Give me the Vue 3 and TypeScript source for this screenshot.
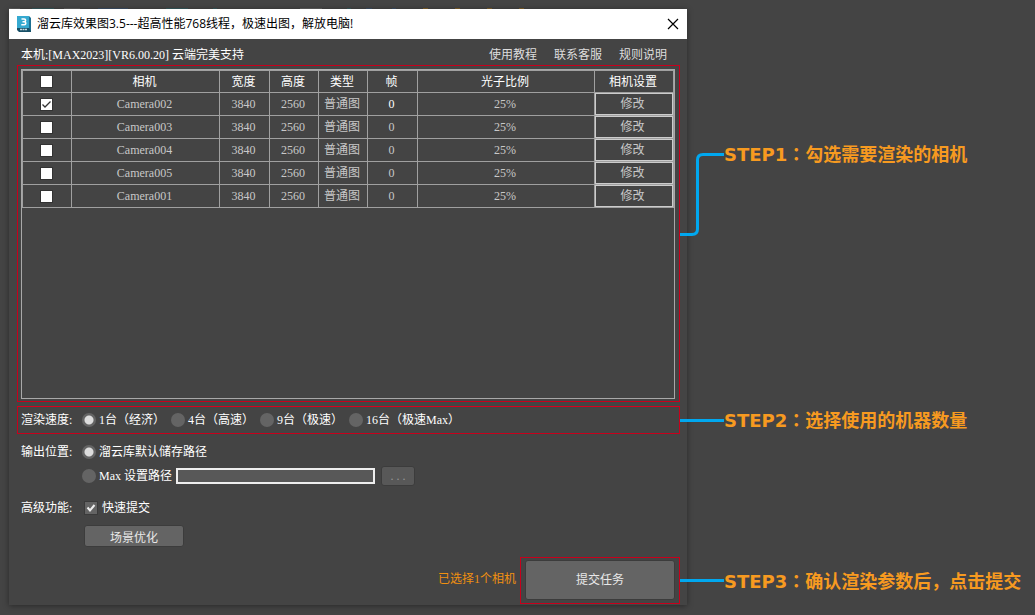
<script setup lang="ts">
import { ref, computed } from 'vue'

interface Camera {
  name: string
  width: number
  height: number
  checked: boolean
}

const cameras = ref<Camera[]>([
  { name: 'Camera002', width: 3840, height: 2560, checked: true },
  { name: 'Camera003', width: 3840, height: 2560, checked: false },
  { name: 'Camera004', width: 3840, height: 2560, checked: false },
  { name: 'Camera005', width: 3840, height: 2560, checked: false },
  { name: 'Camera001', width: 3840, height: 2560, checked: false },
])
const selected = computed(() => cameras.value.filter((c) => c.checked).length)
const all = computed({
  get: () => selected.value === cameras.value.length,
  set: (v: boolean) => cameras.value.forEach((c) => (c.checked = v)),
})

const speeds = ['1台（经济）', '4台（高速）', '9台（极速）', '16台（极速Max）']
const speed = ref(0)
const output = ref('default')
const path = ref('')
const quick = ref(true)
const links = ['使用教程', '联系客服', '规则说明']
</script>

<template>
  <div class="desktop">
    <div class="behind" aria-hidden="true"></div>
    <main class="window">
      <header class="titlebar">
        <svg class="logo" width="16" height="18" viewBox="0 0 16 18" aria-hidden="true">
          <path d="M1 1h11l2 2v14H3l-2-2z" fill="#1c6f92" />
          <path d="M0 1h12v12H0z" fill="#35a9d0" />
          <path d="M0 13h12l2 3v1H2l-2-2z" fill="#174f66" />
          <path d="M4.500 4H7.200Q8.600 4 8.600 5.300T7.200 6.700H5.500M7.200 6.700Q8.800 6.700 8.800 8.200T7.200 9.800H4.300" fill="none" stroke="#fff" stroke-width="1.600" />
          <path d="M3 14.500h7" stroke="#c5d8df" stroke-width="1.400" stroke-dasharray="2 .5" />
        </svg>
        <h1>溜云库效果图3.5---超高性能768线程，极速出图，解放电脑!</h1>
        <button class="close" aria-label="关闭">
          <svg width="12" height="12" viewBox="0 0 12 12"><path d="M1 1 11 11M11 1 1 11" stroke="#000" stroke-width="1.200" /></svg>
        </button>
      </header>

      <div class="info">
        <span>本机:[MAX2023][VR6.00.20] 云端完美支持</span>
        <nav><a v-for="l in links" :key="l" href="#">{{ l }}</a></nav>
      </div>

      <section class="frame cameras">
        <div class="panel">
          <table>
            <colgroup>
              <col class="c-check" /><col class="c-name" /><col class="c-size" /><col class="c-num" />
              <col class="c-num" /><col class="c-size" /><col /><col class="c-edit" />
            </colgroup>
            <thead>
              <tr>
                <th><input v-model="all" type="checkbox" class="tick" aria-label="全选" /></th>
                <th>相机</th><th>宽度</th><th>高度</th><th>类型</th><th>帧</th><th>光子比例</th><th>相机设置</th>
              </tr>
            </thead>
            <tbody>
              <tr v-for="(c, i) in cameras" :key="c.name">
                <td><input v-model="c.checked" type="checkbox" class="tick" :aria-label="c.name" /></td>
                <td>{{ c.name }}</td>
                <td>{{ c.width }}</td>
                <td>{{ c.height }}</td>
                <td>普通图</td>
                <td :class="{ current: i === 0 }">0</td>
                <td>25%</td>
                <td class="edit"><button>修改</button></td>
              </tr>
            </tbody>
          </table>
        </div>
        <div class="callout first">
          <svg width="44" height="84" viewBox="0 0 44 84" aria-hidden="true">
            <path d="M0 81.500H12Q17.500 81.500 17.500 76V7Q17.500 1.500 23 1.500H44" fill="none" stroke="#00a8f0" stroke-width="3" />
          </svg>
          <strong>STEP1<i>：</i>勾选需要渲染的相机</strong>
        </div>
      </section>

      <section class="frame speed" role="radiogroup" aria-label="渲染速度">
        <span class="label">渲染速度:</span>
        <label v-for="(s, i) in speeds" :key="s" class="option">
          <input v-model="speed" type="radio" name="speed" :value="i" />{{ s }}
        </label>
        <div class="callout">
          <span class="line"></span>
          <strong>STEP2<i>：</i>选择使用的机器数量</strong>
        </div>
      </section>

      <section class="settings">
        <span class="label">输出位置:</span>
        <div class="row">
          <label class="option"><input v-model="output" type="radio" name="output" value="default" />溜云库默认储存路径</label>
        </div>
        <div class="row second">
          <label class="option custom"><input v-model="output" type="radio" name="output" value="max" />Max 设置路径</label>
          <input v-model="path" class="path" type="text" aria-label="路径" />
          <button class="btn browse" disabled>. . .</button>
        </div>
        <span class="label adv">高级功能:</span>
        <div class="row adv">
          <label class="quick"><input v-model="quick" type="checkbox" />快速提交</label>
        </div>
        <div class="row second opt"><button class="btn optimize">场景优化</button></div>
      </section>

      <footer>
        <span class="count">已选择{{ selected }}个相机</span>
        <div class="frame submit">
          <button class="btn">提交任务</button>
          <div class="callout">
            <span class="line"></span>
            <strong>STEP3<i>：</i>确认渲染参数后，点击提交</strong>
          </div>
        </div>
      </footer>
    </main>
  </div>
</template>

<style>
body {
  margin: 0;
  background: #444;
}
</style>

<style scoped>
* {
  box-sizing: border-box;
}
.desktop {
  min-height: 100vh;
  padding: 8px 348px 10px 9px;
  background: #444;
  color: #fff;
  font: 12px/16px "Liberation Serif", "Noto Sans CJK SC", serif;
  overflow: hidden;
}
button,
input {
  margin: 0;
  font: inherit;
  color: inherit;
}
.behind {
  height: 1px;
  background: linear-gradient(90deg, #5c5c5c 0 11px, #444 11px 23px, #37595c 23px 45px, #444 45px 55px, #5c5c5c 55px 71px, #444 71px 89px, #3c4f66 89px 119px, #444 119px 157px, #37595c 157px 179px, #444 179px 204px, #37595c 204px 208px, #444 208px 291px, #606060 291px 313px, #444 313px 338px, #37595c 338px 342px, #444 342px 357px, #3c4f66 357px 363px, #444 363px 383px, #3c4f66 383px 387px, #444 387px 414px, #80602a 414px 419px, #444 419px 446px, #80602a 446px 451px, #444 451px 478px, #80602a 478px 483px, #444 483px 510px, #80602a 510px 515px, #444 515px);
}
.window {
  background: #444;
  box-shadow: 0 1px 6px rgba(0, 0, 0, 0.4);
}
.titlebar {
  display: flex;
  align-items: center;
  height: 30px;
  padding: 0 8px;
  background: #fff;
  color: #000;
}
.titlebar h1 {
  flex: 1;
  margin: 0 0 0 4px;
  font: 12px/16px "Open Sans", "Noto Sans CJK SC", sans-serif;
}
.close {
  display: flex;
  padding: 0;
  border: 0;
  background: none;
}
.info {
  display: flex;
  justify-content: space-between;
  align-items: center;
  height: 26px;
  padding: 6px 20px 0 12px;
}
.info nav {
  display: flex;
  gap: 17px;
}
.info a {
  color: #ddd;
  text-decoration: none;
}
.frame {
  position: relative;
  margin: 0 7px 0 8px;
  border: 1px solid #c8001c;
}
.cameras {
  padding: 3px 4px 2px 3px;
}
.panel {
  min-height: 330px;
  border: 1px solid #a8a8a8;
}
table {
  width: 100%;
  table-layout: fixed;
  border-collapse: separate;
  border-spacing: 0;
  border-top: 1px solid #a0a0a0;
  border-left: 1px solid #a0a0a0;
}
.c-check { width: 49px; }
.c-name { width: 148px; }
.c-size { width: 50px; }
.c-num { width: 49px; }
.c-edit { width: 79px; }
th,
td {
  height: 23px;
  padding: 0 2px 0 0;
  border-right: 1px solid #a0a0a0;
  border-bottom: 1px solid #a0a0a0;
  text-align: center;
  font-weight: normal;
  line-height: 16px;
}
th {
  height: 22px;
}
td {
  color: #c8c8c8;
}
td.current {
  color: #fff;
}
td.edit {
  padding: 0;
}
.edit button {
  display: block;
  width: 100%;
  height: 22px;
  padding: 0 3px 0 0;
  border: 1px solid #ccc;
  background: none;
}
.tick {
  display: block;
  appearance: none;
  width: 13px;
  height: 13px;
  margin: 0 auto;
  border: 1px solid #333;
  background: #fff;
}
.tick:checked {
  background: #fff url("data:image/svg+xml,%3Csvg xmlns='http://www.w3.org/2000/svg' viewBox='0 0 11 11'%3E%3Cpath d='M1.500 5.500 4 8 9.500 2.500' fill='none' stroke='%23333' stroke-width='1.300'/%3E%3C/svg%3E");
}
.speed {
  display: flex;
  align-items: center;
  height: 28px;
  margin-top: 4px;
  padding-left: 3px;
  border-top-color: #d8001c;
}
.label {
  width: 61px;
}
.option {
  display: flex;
  align-items: center;
  gap: 3px;
  min-width: 89px;
  white-space: nowrap;
}
.option input {
  flex: none;
  appearance: none;
  width: 14px;
  height: 14px;
  border-radius: 50%;
  background: #646464;
}
.option input:checked {
  background: radial-gradient(circle, #ddd 0 4px, #646464 5px);
}
.settings {
  display: grid;
  grid-template-columns: 61px minmax(0, 1fr);
  padding: 6px 12px 0;
}
.settings > * {
  height: 24px;
  line-height: 24px;
}
.row {
  display: flex;
  align-items: center;
}
.second {
  grid-column: 2;
}
.custom {
  min-width: 94px;
}
.settings > .adv {
  margin-top: 8px;
}
.settings > .opt {
  height: 32px;
}
.path {
  width: 199px;
  height: 16px;
  padding: 0 2px;
  border: 2px solid #eee;
  border-radius: 0;
  background: #585858;
}
.btn {
  padding: 0;
  border: 1px solid #3c3c3c;
  border-radius: 3px;
  background: #646464;
  color: #e8e8e8;
}
.browse {
  width: 34px;
  height: 20px;
  margin-left: 6px;
  background: #585858;
  color: #999;
  line-height: 16px;
}
.optimize {
  width: 100px;
  height: 22px;
  margin-left: 2px;
}
.quick {
  display: flex;
  align-items: center;
  gap: 4px;
  padding-left: 2px;
}
.quick input {
  appearance: none;
  width: 14px;
  height: 14px;
  border: 1px solid #3a3a3a;
  background: #646464;
}
.quick input:checked {
  background: #646464 url("data:image/svg+xml,%3Csvg xmlns='http://www.w3.org/2000/svg' viewBox='0 0 12 12'%3E%3Cpath d='M2.500 5.500 5 8.500 9.500 3' fill='none' stroke='%23eee' stroke-width='2'/%3E%3C/svg%3E");
}
footer {
  display: flex;
  justify-content: flex-end;
  align-items: center;
  padding: 5px 0 1px;
}
.count {
  padding-bottom: 4px;
  color: #f09010;
}
.submit {
  margin-left: 4px;
  padding: 2px 4px 3px;
}
.submit .btn {
  display: block;
  width: 150px;
  height: 40px;
}
.callout {
  position: absolute;
  left: 100%;
  top: 50%;
  display: flex;
  align-items: center;
  margin-left: 1px;
  transform: translateY(-50%);
  white-space: nowrap;
}
.callout.first {
  align-items: flex-start;
  top: 87px;
  transform: none;
}
.callout strong {
  color: #f79a20;
  font: bold 18px/24px "DejaVu Sans", "Noto Sans CJK SC", sans-serif;
}
.callout.first strong {
  margin-top: -12px;
}
.callout i {
  font-family: "Noto Sans CJK TC", sans-serif;
  font-style: normal;
}
.line {
  width: 44px;
  height: 3px;
  background: #00a8f0;
}
</style>
